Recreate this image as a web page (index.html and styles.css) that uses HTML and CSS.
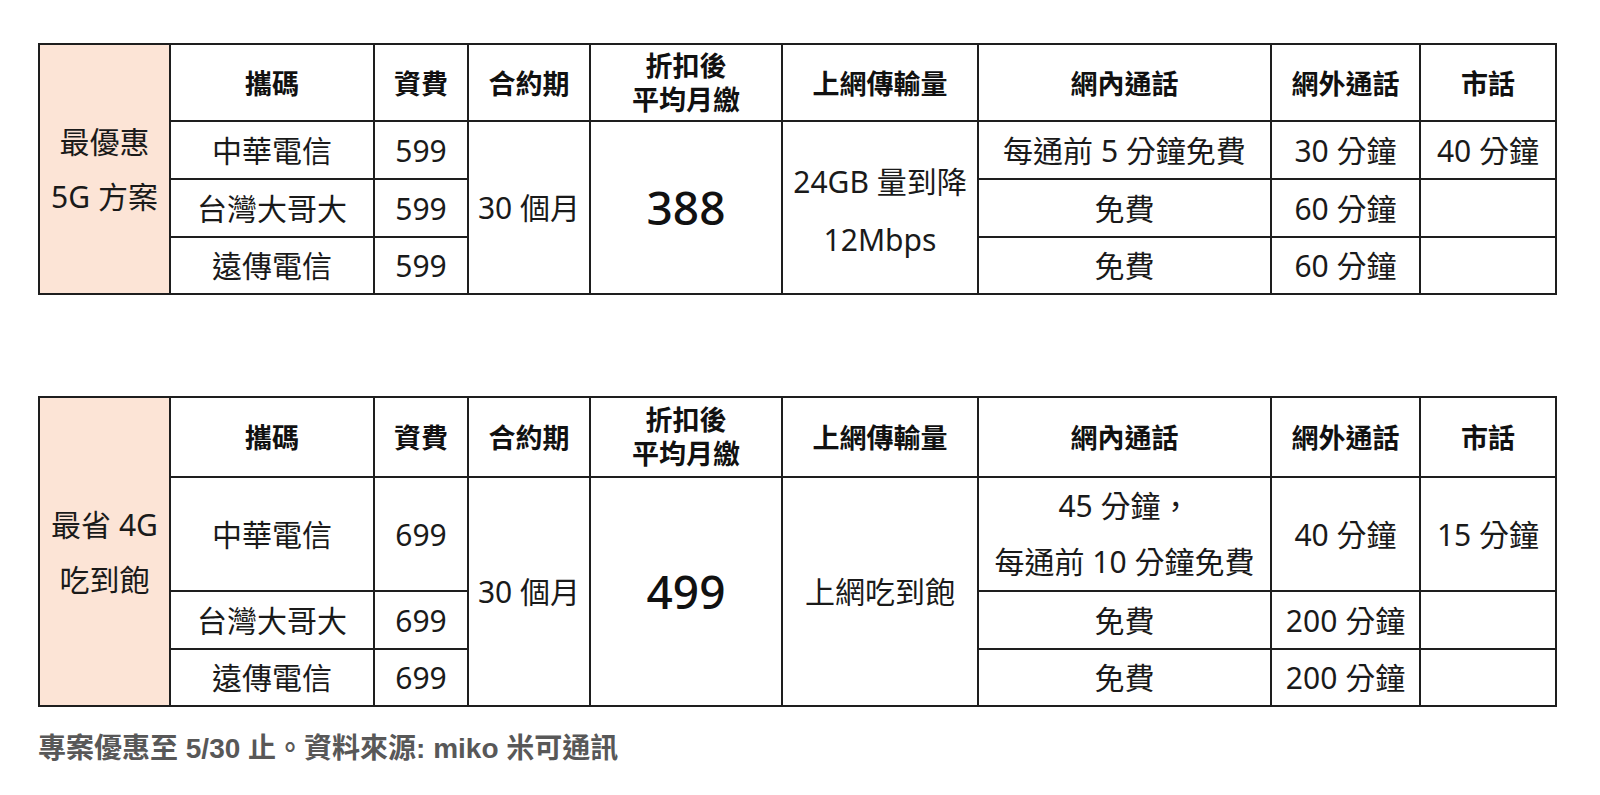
FILE: index.html
```html
<!DOCTYPE html>
<html lang="zh-Hant">
<head>
<meta charset="utf-8">
<title>方案比較</title>
<link rel="stylesheet" href="styles.css">
</head>
<body>
<main class="page">
  <table class="plan">
    <colgroup>
      <col class="c-label"><col class="c-carrier"><col class="c-fee"><col class="c-term"><col class="c-avg"><col class="c-data"><col class="c-on"><col class="c-off"><col class="c-land">
    </colgroup>
    <tr class="head head-a">
      <td class="label" rowspan="4">最優惠<br>5G 方案</td>
      <th>攜碼</th>
      <th>資費</th>
      <th>合約期</th>
      <th class="two">折扣後<br>平均月繳</th>
      <th>上網傳輸量</th>
      <th>網內通話</th>
      <th>網外通話</th>
      <th>市話</th>
    </tr>
    <tr class="row">
      <td>中華電信</td>
      <td>599</td>
      <td rowspan="3">30 個月</td>
      <td rowspan="3" class="big">388</td>
      <td rowspan="3" class="wide-lines">24GB 量到降<br>12Mbps</td>
      <td>每通前 5 分鐘免費</td>
      <td>30 分鐘</td>
      <td>40 分鐘</td>
    </tr>
    <tr class="row">
      <td>台灣大哥大</td>
      <td>599</td>
      <td>免費</td>
      <td>60 分鐘</td>
      <td></td>
    </tr>
    <tr class="row last">
      <td>遠傳電信</td>
      <td>599</td>
      <td>免費</td>
      <td>60 分鐘</td>
      <td></td>
    </tr>
  </table>

  <table class="plan second">
    <colgroup>
      <col class="c-label"><col class="c-carrier"><col class="c-fee"><col class="c-term"><col class="c-avg"><col class="c-data"><col class="c-on"><col class="c-off"><col class="c-land">
    </colgroup>
    <tr class="head head-b">
      <td class="label" rowspan="4">最省 4G<br>吃到飽</td>
      <th>攜碼</th>
      <th>資費</th>
      <th>合約期</th>
      <th class="two">折扣後<br>平均月繳</th>
      <th>上網傳輸量</th>
      <th>網內通話</th>
      <th>網外通話</th>
      <th>市話</th>
    </tr>
    <tr class="row tall">
      <td>中華電信</td>
      <td>699</td>
      <td rowspan="3">30 個月</td>
      <td rowspan="3" class="big">499</td>
      <td rowspan="3">上網吃到飽</td>
      <td class="multi">45 分鐘，<br>每通前 10 分鐘免費</td>
      <td>40 分鐘</td>
      <td>15 分鐘</td>
    </tr>
    <tr class="row">
      <td>台灣大哥大</td>
      <td>699</td>
      <td>免費</td>
      <td>200 分鐘</td>
      <td></td>
    </tr>
    <tr class="row last">
      <td>遠傳電信</td>
      <td>699</td>
      <td>免費</td>
      <td>200 分鐘</td>
      <td></td>
    </tr>
  </table>

  <p class="note">專案優惠至 5/30 止。資料來源: miko 米可通訊</p>
</main>
</body>
</html>
```

FILE: styles.css
```css
html, body {
  margin: 0;
  padding: 0;
  background: #ffffff;
}

.page {
  padding: 43px 0 0 38px;
  font-family: "Noto Sans", "Noto Sans CJK TC", sans-serif;
  color: #1a1a1a;
}

.plan {
  border-collapse: collapse;
  table-layout: fixed;
  width: 1519px;
  border: 2px solid #1e1e1e;
}

.plan.second {
  margin-top: 101px;
}

.c-label { width: 131px; }
.c-carrier { width: 204px; }
.c-fee { width: 94px; }
.c-term { width: 122px; }
.c-avg { width: 192px; }
.c-data { width: 196px; }
.c-on { width: 293px; }
.c-off { width: 149px; }
.c-land { width: 136px; }

.plan th,
.plan td {
  border: 2px solid #1e1e1e;
  padding: 0;
  text-align: center;
  vertical-align: middle;
  white-space: nowrap;
  overflow: hidden;
}

.plan th {
  font-family: "Noto Sans", "Noto Sans CJK TC", sans-serif;
  font-weight: 700;
  font-size: 27px;
  line-height: 34px;
  color: #111111;
  padding-top: 2px;
}

.plan th.two {
  padding-top: 0;
}

.head-a { height: 77px; }
.head-b { height: 80px; }

.plan td {
  font-size: 30px;
  line-height: 55px;
  font-weight: 400;
}

.row { height: 58px; }
.row.last { height: 57px; }
.row.tall { height: 114px; }

.plan td.label {
  background: #fce4d6;
  line-height: 55px;
}

.plan td.wide-lines {
  line-height: 58px;
  padding-top: 6px;
}

.plan td.multi {
  line-height: 56px;
}

.plan td.big {
  font-size: 46px;
  line-height: 55px;
  font-weight: 500;
  color: #111111;
}

.note {
  margin: 25px 0 0 0;
  font-family: "Liberation Sans", "Noto Sans CJK TC", sans-serif;
  font-weight: 700;
  font-size: 28px;
  line-height: 34px;
  color: #585858;
}
```
